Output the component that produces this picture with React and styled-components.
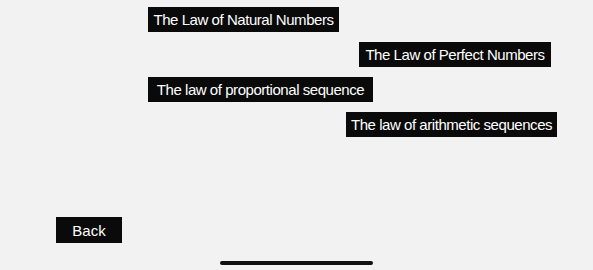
import React from "react";
import styled, { createGlobalStyle } from "styled-components";

const Global = createGlobalStyle`
  html, body { margin: 0; padding: 0; background: #f2f2f2; }
  body { font-family: "Liberation Sans", Arial, sans-serif; }
`;

const Screen = styled.div`
  width: 593px;
  height: 270px;
  background: #f2f2f2;
  display: flex;
  flex-direction: column;
  box-sizing: border-box;
  padding-top: 7px;
  overflow: hidden;
`;

const List = styled.div`
  display: flex;
  flex-direction: column;
  gap: 10px;
`;

const Row = styled.div`
  display: flex;
  padding-left: ${(p) => p.$indent}px;
`;

const Tag = styled.button`
  height: 25px;
  box-sizing: border-box;
  padding: 0;
  border: none;
  background: #0a0a0a;
  color: #ffffff;
  font-family: "Liberation Sans", Arial, sans-serif;
  font-size: 15px;
  letter-spacing: -0.45px;
  line-height: 25px;
  white-space: nowrap;
  width: ${(p) => p.$w}px;
  text-align: center;
`;

const Footer = styled.div`
  margin-top: auto;
  display: flex;
  flex-direction: column;
`;

const BackRow = styled.div`
  display: flex;
  padding-left: 56px;
`;

const BackButton = styled.button`
  width: 66px;
  height: 26px;
  border: none;
  background: #0a0a0a;
  color: #ffffff;
  font-family: "Liberation Sans", Arial, sans-serif;
  font-size: 15px;
  padding: 0;
`;

const HomeBar = styled.div`
  align-self: center;
  width: 153px;
  height: 4px;
  border-radius: 2px;
  background: #111;
  margin-top: 18px;
  margin-bottom: 5px;
`;

const items = [
  { text: "The Law of Natural Numbers", indent: 148, w: 191 },
  { text: "The Law of Perfect Numbers", indent: 359, w: 192 },
  { text: "The law of proportional sequence", indent: 148, w: 225 },
  { text: "The law of arithmetic sequences", indent: 346, w: 211 },
];

export default function App() {
  return (
    <>
      <Global />
      <Screen>
        <List>
          {items.map((it) => (
            <Row key={it.text} $indent={it.indent}>
              <Tag $w={it.w}>{it.text}</Tag>
            </Row>
          ))}
        </List>
        <Footer>
          <BackRow>
            <BackButton>Back</BackButton>
          </BackRow>
          <HomeBar />
        </Footer>
      </Screen>
    </>
  );
}
